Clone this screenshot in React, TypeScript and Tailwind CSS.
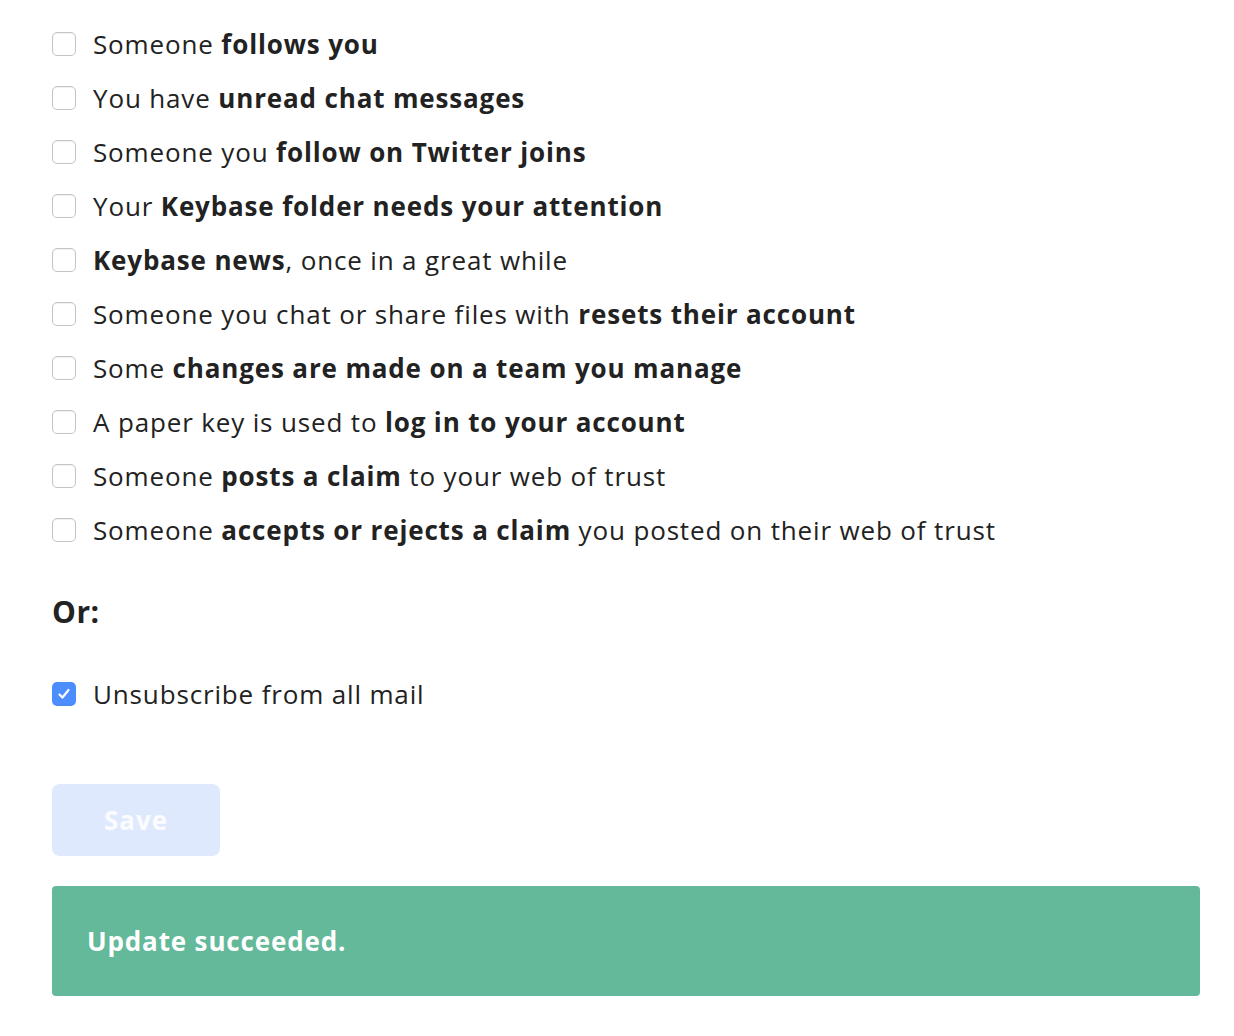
import React from "react";

const rows: React.ReactNode[] = [
  <>Someone <b>follows you</b></>,
  <>You have <b>unread chat messages</b></>,
  <>Someone you <b>follow on Twitter joins</b></>,
  <>Your <b>Keybase folder needs your attention</b></>,
  <><b>Keybase news</b>, once in a great while</>,
  <>Someone you chat or share files with <b>resets their account</b></>,
  <>Some <b>changes are made on a team you manage</b></>,
  <>A paper key is used to <b>log in to your account</b></>,
  <>Someone <b>posts a claim</b> to your web of trust</>,
  <>Someone <b>accepts or rejects a claim</b> you posted on their web of trust</>,
];

function Box({ checked }: { checked?: boolean }) {
  return checked ? (
    <span className="flex h-[24px] w-[24px] shrink-0 items-center justify-center rounded-[5px] bg-[#4c8eff]">
      <svg width="16" height="16" viewBox="0 0 16 16" fill="none">
        <path d="M3.5 8.5 L6.5 11.5 L12.5 4" stroke="white" strokeWidth="2.2" strokeLinecap="round" strokeLinejoin="round" />
      </svg>
    </span>
  ) : (
    <span className="h-[24px] w-[24px] shrink-0 rounded-[5px] border-[1.5px] border-[#c4c4c4] bg-white shadow-[inset_0_1px_1px_rgba(0,0,0,0.06)]" />
  );
}

export default function App() {
  return (
    <div
      className="min-h-[1036px] w-[1234px] bg-white pl-[52px] pr-[34px] pt-[17px] text-[#222222]"
      style={{ fontFamily: "'Open Sans', Lato, sans-serif" }}
    >
      <div className="flex flex-col">
        {rows.map((r, i) => (
          <div key={i} className="flex h-[54px] items-center gap-[17px] text-[26px] tracking-[0.85px] [&_b]:font-bold">
            <Box />
            <span>{r}</span>
          </div>
        ))}
      </div>
      <div className="mt-[37px] h-[36px] text-[30px] font-bold leading-[36px] tracking-[0.5px] text-[#222]">Or:</div>
      <div className="mt-[37px] flex h-[54px] items-center gap-[17px] text-[26px] tracking-[0.85px]">
        <Box checked />
        <span>Unsubscribe from all mail</span>
      </div>
      <button className="mt-[63px] flex h-[72px] w-[168px] items-center justify-center rounded-[8px] bg-[#dfe9fd] text-[26px] font-bold tracking-[1px] text-white/85">
        Save
      </button>
      <div className="mt-[30px] flex h-[110px] items-center rounded-[4px] bg-[#63b99a] pl-[35px] text-[26px] font-bold tracking-[0.85px] text-white">
        Update succeeded.
      </div>
    </div>
  );
}
